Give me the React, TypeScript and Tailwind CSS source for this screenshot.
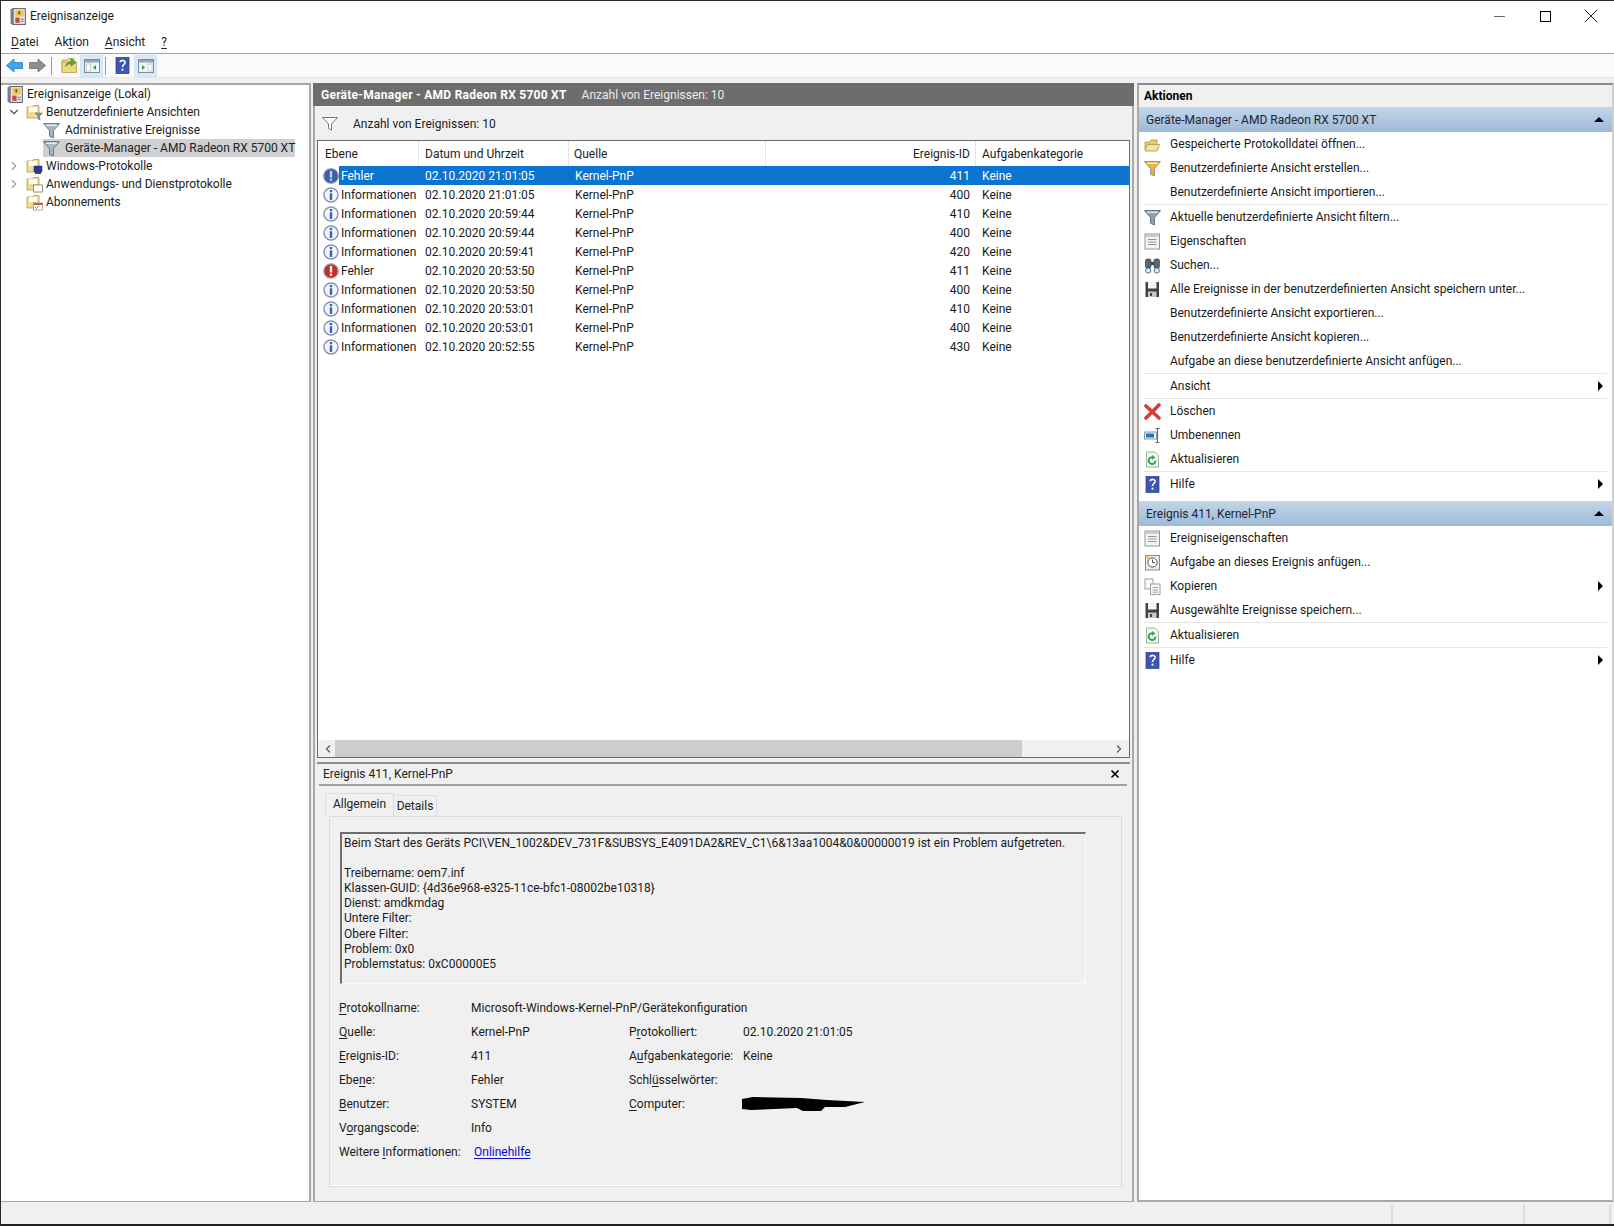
import { ChevronDown, ChevronRight, ChevronLeft, X, Minus } from "lucide-react";

const rows = [
  ["err0", "Fehler", "02.10.2020 21:01:05", "411"],
  ["info", "Informationen", "02.10.2020 21:01:05", "400"],
  ["info", "Informationen", "02.10.2020 20:59:44", "410"],
  ["info", "Informationen", "02.10.2020 20:59:44", "400"],
  ["info", "Informationen", "02.10.2020 20:59:41", "420"],
  ["err", "Fehler", "02.10.2020 20:53:50", "411"],
  ["info", "Informationen", "02.10.2020 20:53:50", "400"],
  ["info", "Informationen", "02.10.2020 20:53:01", "410"],
  ["info", "Informationen", "02.10.2020 20:53:01", "400"],
  ["info", "Informationen", "02.10.2020 20:52:55", "430"],
];

function LogIcon({ className = "" }: { className?: string }) {
  return (
    <svg viewBox="0 0 16 16" className={`h-[17px] w-[17px] shrink-0 ${className}`}>
      <rect x="2.5" y="0.5" width="12" height="15" fill="#e9e4d4" stroke="#6b6b78" />
      <rect x="0.5" y="1" width="3" height="14" fill="#7a7a90" />
      <rect x="5" y="2" width="8" height="6" fill="#e8c860" />
      <rect x="8" y="3" width="1.5" height="3" fill="#6a4a10" />
      <rect x="5" y="9" width="4" height="5" fill="#c05050" />
      <rect x="10" y="10" width="3" height="1" fill="#8888a0" />
      <rect x="10" y="12" width="3" height="1" fill="#8888a0" />
    </svg>
  );
}

function Funnel({ color = "#a9b8c2", stem = "#5f6f7a" }: { color?: string; stem?: string }) {
  return (
    <svg viewBox="0 0 16 16" className="h-[17px] w-[17px] shrink-0">
      <path d="M0.5 1.5 H15.5 L9.8 8 V15 L6.2 13.5 V8 Z" fill={color} stroke={stem} strokeWidth="0.9" />
      <path d="M3 3 H13" stroke="#ffffff" strokeWidth="1" />
    </svg>
  );
}

function Folder({ badge }: { badge?: "funnel" | "pc" | "win" | "cal" | "up" }) {
  return (
    <svg viewBox="0 0 17 17" className="h-[17px] w-[17px] shrink-0">
      <path d="M1 3 H6 L7.5 1.5 H13 V14 H1 Z" fill="#f2dc94" stroke="#b79b52" strokeWidth="0.8" />
      {badge !== "up" && <rect x="3" y="3" width="8" height="5" fill="#ffffff" />}
      {badge === "up" && (
        <g>
          <path d="M1 5 H15.5 V15.5 H1 Z" fill="#f0d87e" stroke="#b79b52" strokeWidth="0.8" />
          <path d="M4.5 9.5 C5 6 8 4.5 10 4.5 V1.5 L15 5.5 L10 9 V6.8 C8 6.8 6 7.5 4.5 9.5 Z" fill="#5aa83c" stroke="#3a7d26" strokeWidth="0.5" />
        </g>
      )}
      {badge === "funnel" && <path d="M9 9 H16.5 L13.7 12 V16 L12 15 V12 Z" fill="#8b98a0" stroke="#58646c" strokeWidth="0.5" />}
      {badge === "pc" && (
        <g>
          <rect x="8" y="8" width="8" height="6" fill="#1e3ca8" stroke="#333" strokeWidth="0.5" />
          <rect x="9" y="14" width="6" height="2" fill="#444" />
        </g>
      )}
      {badge === "win" && <rect x="7.5" y="9" width="9" height="7" fill="#fff" stroke="#777" strokeWidth="0.8" />}
      {badge === "cal" && (
        <g>
          <rect x="7.5" y="9" width="9" height="7" fill="#fff" stroke="#888" strokeWidth="0.7" />
          <rect x="7.5" y="9" width="9" height="2" fill="#c95a5a" />
          <path d="M9 13 L10.5 14.5 L13 11.5" stroke="#2d7f2d" strokeWidth="0.8" fill="none" />
        </g>
      )}
    </svg>
  );
}

function LevelIcon({ kind }: { kind: string }) {
  if (kind === "err") {
    return (
      <svg viewBox="0 0 16 16" className="h-4 w-4 shrink-0">
        <circle cx="8" cy="8" r="7.2" fill="#c92a2a" stroke="#a8a0a0" strokeWidth="1.3" />
        <rect x="6.8" y="3" width="2.4" height="6.5" fill="#fff" />
        <rect x="6.8" y="10.6" width="2.4" height="2.2" fill="#fff" />
      </svg>
    );
  }
  if (kind === "err0") {
    return (
      <svg viewBox="0 0 16 16" className="h-4 w-4 shrink-0">
        <circle cx="8" cy="8" r="7.2" fill="#3d5ea8" stroke="#6f88bb" strokeWidth="1.3" />
        <rect x="6.8" y="3" width="2.4" height="6.5" fill="#c8d4ec" />
        <rect x="6.8" y="10.6" width="2.4" height="2.2" fill="#c8d4ec" />
      </svg>
    );
  }
  return (
    <svg viewBox="0 0 16 16" className="h-4 w-4 shrink-0">
      <circle cx="8" cy="8" r="7" fill="#f2f5fb" stroke="#8a95ad" strokeWidth="1.5" />
      <rect x="6.8" y="3" width="2.4" height="2.2" fill="#3560b8" />
      <rect x="6.8" y="6.3" width="2.4" height="6.6" fill="#3560b8" />
    </svg>
  );
}

function ActionIcon({ name }: { name?: string }) {
  const cls = "h-[17px] w-[17px] shrink-0";
  switch (name) {
    case "open":
      return (
        <svg viewBox="0 0 17 17" className={cls}>
          <path d="M1 6 H6 L7 4 H13 V14 H1 Z" fill="#e6c877" stroke="#b29248" strokeWidth="0.8" />
          <path d="M1 15 L3.5 8.5 H15.5 L13 15 Z" fill="#f4e2a8" stroke="#b29248" strokeWidth="0.8" />
        </svg>
      );
    case "create":
      return <Funnel color="#eeb33a" stem="#8b8b8b" />;
    case "filter":
      return <Funnel color="#8fa1ad" stem="#5e6e78" />;
    case "props":
    case "evprops":
      return (
        <svg viewBox="0 0 17 17" className={cls}>
          <rect x="1" y="1" width="14.5" height="15" fill="#f3f3f3" stroke="#8a98a4" />
          <rect x="2" y="2" width="12.5" height="2" fill="#c6ced6" />
          <path d="M4 6.5H12.5M4 9H12.5M4 11.5H12.5" stroke="#8f98a2" strokeWidth="1" />
        </svg>
      );
    case "find":
      return (
        <svg viewBox="0 0 17 17" className={cls}>
          <rect x="1.5" y="2" width="5.5" height="9" rx="1.5" fill="#5d6670" stroke="#333" strokeWidth="0.6" />
          <rect x="10" y="2" width="5.5" height="9" rx="1.5" fill="#5d6670" stroke="#333" strokeWidth="0.6" />
          <rect x="7" y="5" width="3" height="3" fill="#444" />
          <circle cx="4.2" cy="13.5" r="2.6" fill="#dce8f4" stroke="#35608f" strokeWidth="0.9" />
          <circle cx="12.8" cy="13.5" r="2.6" fill="#dce8f4" stroke="#35608f" strokeWidth="0.9" />
        </svg>
      );
    case "save":
      return (
        <svg viewBox="0 0 17 17" className={cls}>
          <path d="M1.5 1 H15 V16 H1.5 Z" fill="#3d4348" />
          <rect x="4" y="1" width="8.5" height="6.5" fill="#f5f5f5" />
          <rect x="4" y="10.5" width="8.5" height="5.5" fill="#c9c9c9" />
          <rect x="6" y="12" width="2" height="3" fill="#444" />
        </svg>
      );
    case "delete":
      return (
        <svg viewBox="0 0 17 17" className={cls}>
          <path d="M2 3 L15 15 M15 2 L2 15" stroke="#d93a3a" strokeWidth="3.6" strokeLinecap="round" />
        </svg>
      );
    case "rename":
      return (
        <svg viewBox="0 0 17 17" className={cls}>
          <rect x="0.5" y="5" width="12" height="7" fill="#eef2f6" stroke="#8b98a4" />
          <rect x="2" y="6.5" width="8" height="4" fill="#1e78c8" />
          <path d="M11.5 1.5H15.5M13.5 1.5V15.5M11.5 15.5H15.5" stroke="#6a6a6a" strokeWidth="1.1" fill="none" />
        </svg>
      );
    case "refresh":
      return (
        <svg viewBox="0 0 17 17" className={cls}>
          <path d="M2.5 1 H11 L14.5 4.5 V16 H2.5 Z" fill="#f3f6f3" stroke="#a0b0a6" />
          <path d="M11.5 9.5 A3.4 3.4 0 1 1 8.5 6.2" fill="none" stroke="#36a35a" strokeWidth="2" />
          <path d="M8 4 L11.5 6.5 L8 8.8 Z" fill="#36a35a" />
        </svg>
      );
    case "help":
      return (
        <svg viewBox="0 0 17 17" className={cls}>
          <rect x="2" y="0.5" width="13" height="16" fill="#3b56b4" stroke="#27397f" strokeWidth="0.7" />
          <path d="M6.2 5.2 C6.4 2.8 11 2.8 11 5.4 C11 7.6 8.5 7.4 8.5 10" fill="none" stroke="#fff" strokeWidth="1.6" />
          <rect x="7.6" y="11.6" width="1.8" height="2" fill="#fff" />
        </svg>
      );
    case "task":
      return (
        <svg viewBox="0 0 17 17" className={cls}>
          <rect x="1.5" y="1.5" width="14" height="14.5" fill="#efeadd" stroke="#8c8c8c" />
          <circle cx="8.5" cy="8.5" r="4.6" fill="#fff" stroke="#555" />
          <path d="M8.5 5.5V8.5H11" stroke="#555" fill="none" />
          <path d="M3 1L4 3L6 3.4L4.3 4.8L2.5 5Z" fill="#f1b32c" />
        </svg>
      );
    case "copy":
      return (
        <svg viewBox="0 0 17 17" className={cls}>
          <rect x="1" y="1" width="8" height="10" fill="#fafafa" stroke="#93a0aa" />
          <rect x="6.5" y="6" width="9.5" height="10.5" fill="#fafafa" stroke="#93a0aa" />
          <path d="M8.5 9.5H14M8.5 12H14M8.5 14.2H14" stroke="#93a0aa" />
        </svg>
      );
    default:
      return <span className="w-[17px] shrink-0" />;
  }
}

type Act = { label?: string; icon?: string; sub?: boolean; sep?: boolean };

const actions1: Act[] = [
  { label: "Gespeicherte Protokolldatei öffnen...", icon: "open" },
  { label: "Benutzerdefinierte Ansicht erstellen...", icon: "create" },
  { label: "Benutzerdefinierte Ansicht importieren..." },
  { sep: true },
  { label: "Aktuelle benutzerdefinierte Ansicht filtern...", icon: "filter" },
  { label: "Eigenschaften", icon: "props" },
  { label: "Suchen...", icon: "find" },
  { label: "Alle Ereignisse in der benutzerdefinierten Ansicht speichern unter...", icon: "save" },
  { label: "Benutzerdefinierte Ansicht exportieren..." },
  { label: "Benutzerdefinierte Ansicht kopieren..." },
  { label: "Aufgabe an diese benutzerdefinierte Ansicht anfügen..." },
  { sep: true },
  { label: "Ansicht", sub: true },
  { sep: true },
  { label: "Löschen", icon: "delete" },
  { label: "Umbenennen", icon: "rename" },
  { label: "Aktualisieren", icon: "refresh" },
  { sep: true },
  { label: "Hilfe", icon: "help", sub: true },
];

const actions2: Act[] = [
  { label: "Ereigniseigenschaften", icon: "evprops" },
  { label: "Aufgabe an dieses Ereignis anfügen...", icon: "task" },
  { label: "Kopieren", icon: "copy", sub: true },
  { label: "Ausgewählte Ereignisse speichern...", icon: "save" },
  { sep: true },
  { label: "Aktualisieren", icon: "refresh" },
  { sep: true },
  { label: "Hilfe", icon: "help", sub: true },
];

function ActionList({ items }: { items: Act[] }) {
  return (
    <div className="flex flex-col">
      {items.map((a, i) =>
        a.sep ? (
          <div key={i} className="mx-[5px] h-px bg-[#e6e6e6]" />
        ) : (
          <div key={i} className="flex h-6 items-center pl-[5px] pr-[9px] text-[#1a1a1a]">
            <ActionIcon name={a.icon} />
            <span className="ml-[9px] flex-1">{a.label}</span>
            {a.sub && <span className="h-0 w-0 border-y-[5px] border-l-[5px] border-y-transparent border-l-black" />}
          </div>
        ),
      )}
    </div>
  );
}

function SectionHead({ title }: { title: string }) {
  return (
    <div className="flex h-[25px] items-center justify-between bg-gradient-to-b from-[#c3d6e9] to-[#9cbad9] pl-[7px] pr-[7px] text-[#1c2530]">
      <span>{title}</span>
      <span className="mr-px h-0 w-0 border-x-[5px] border-b-[5px] border-x-transparent border-b-black" />
    </div>
  );
}

function Ul({ children }: { children: string }) {
  return <span className="underline underline-offset-2">{children}</span>;
}

function Field({ label, value }: { label: React.ReactNode; value?: React.ReactNode }) {
  return (
    <div className="flex h-6 items-center text-[#1a1a1a]">
      <span className="w-[132px] shrink-0">{label}</span>
      <span>{value}</span>
    </div>
  );
}

export default function App() {
  return (
    <div
      className="flex h-[1226px] w-[1614px] flex-col overflow-hidden border-t border-l border-[#2a2a2a] bg-[#f0f0f0] text-[12px] leading-none text-[#222]"
      style={{ fontFamily: 'Roboto, sans-serif' }}
    >
      {/* title bar */}
      <div className="flex h-[30px] shrink-0 items-center bg-white pl-[9px]">
        <LogIcon />
        <span className="ml-[3px] text-[#222]">Ereignisanzeige</span>
        <div className="ml-auto flex items-center">
          <span className="flex w-[46px] justify-center"><Minus className="h-[17px] w-[17px]" strokeWidth={1} absoluteStrokeWidth /></span>
          <span className="flex w-[46px] justify-center"><span className="h-[11px] w-[11px] border border-black" /></span>
          <span className="flex w-[46px] justify-center"><X className="h-6 w-6" strokeWidth={1} absoluteStrokeWidth /></span>
        </div>
      </div>
      {/* menu */}
      <div className="flex h-[23px] shrink-0 items-center gap-[16px] border-b border-[#a0a0a0] bg-white pl-[10px]">
        <span><Ul>D</Ul>atei</span>
        <span>Ak<Ul>t</Ul>ion</span>
        <span><Ul>A</Ul>nsicht</span>
        <span><Ul>?</Ul></span>
      </div>
      {/* toolbar */}
      <div className="flex h-[24px] shrink-0 items-center border-b border-[#e8e8e8] bg-[#fafafa] pl-[5px]">
        <svg viewBox="0 0 17 15" className="h-[15px] w-[17px]"><path d="M0.5 7.5 L8 1 V4.5 H16.5 V10.5 H8 V14 Z" fill="#3ea5e8" stroke="#2a78b8" strokeWidth="0.8" /></svg>
        <svg viewBox="0 0 17 15" className="ml-[6px] h-[15px] w-[17px]"><path d="M16.5 7.5 L9 1 V4.5 H0.5 V10.5 H9 V14 Z" fill="#8f8f8f" stroke="#6c6c6c" strokeWidth="0.8" /></svg>
        <span className="ml-[5px] h-[18px] w-px bg-[#9a9a9a]" />
        <span className="ml-[9px] flex"><Folder badge="up" /></span>
        <span className="ml-[2px] flex h-[22px] w-[23px] items-center justify-center border border-[#cce4f7] bg-[#d8eafa]">
          <svg viewBox="0 0 16 14" className="h-[14px] w-[16px]"><rect x="0.5" y="0.5" width="15" height="13" fill="#eef3f6" stroke="#7f8b94" /><rect x="1" y="1" width="14" height="2.5" fill="#9aa6b0" /><rect x="2.5" y="5" width="4" height="7" fill="#fff" stroke="#9aa" strokeWidth="0.5" /><path d="M12 6 L9 8.5 L12 11 Z" fill="#3a9a4a" /></svg>
        </span>
        <span className="ml-[2px] h-[18px] w-px bg-[#9a9a9a]" />
        <span className="ml-[8px] flex"><ActionIcon name="help" /></span>
        <span className="ml-[3px] flex h-[22px] w-[23px] items-center justify-center border border-[#cce4f7] bg-[#d8eafa]">
          <svg viewBox="0 0 16 14" className="h-[14px] w-[16px]"><rect x="0.5" y="0.5" width="15" height="13" fill="#eef3f6" stroke="#7f8b94" /><rect x="1" y="1" width="14" height="2.5" fill="#9aa6b0" /><rect x="10" y="5" width="4" height="7" fill="#fff" stroke="#9aa" strokeWidth="0.5" /><path d="M4 6 L7 8.5 L4 11 Z" fill="#3a9a4a" /></svg>
        </span>
      </div>
      {/* main */}
      <div className="flex min-h-0 flex-1 pt-[5px]">
        {/* tree */}
        <div className="flex w-[310px] shrink-0 flex-col border-2 border-l-0 border-b border-t-[#a8a8a8] border-r-[#a8a8a8] border-b-[#a8a8a8] bg-white pl-[6px]">
          <div className="flex h-[18px] items-center"><LogIcon /><span className="ml-[3px]">Ereignisanzeige (Lokal)</span></div>
          <div className="flex h-[18px] items-center"><ChevronDown className="h-[14px] w-[14px] text-[#555]" strokeWidth={2} /><span className="ml-[5px] flex"><Folder badge="funnel" /></span><span className="ml-[3px]">Benutzerdefinierte Ansichten</span></div>
          <div className="flex h-[18px] items-center pl-[36px]"><Funnel /><span className="ml-[5px]">Administrative Ereignisse</span></div>
          <div className="flex h-[18px] items-center pl-[36px]"><div className="flex h-[18px] w-[252px] items-center bg-[#d0d0d0]"><Funnel /><span className="ml-[5px] whitespace-nowrap">Geräte-Manager - AMD Radeon RX 5700 XT</span></div></div>
          <div className="flex h-[18px] items-center"><ChevronRight className="h-[14px] w-[14px] text-[#a0a0a0]" strokeWidth={2} /><span className="ml-[5px] flex"><Folder badge="pc" /></span><span className="ml-[3px]">Windows-Protokolle</span></div>
          <div className="flex h-[18px] items-center"><ChevronRight className="h-[14px] w-[14px] text-[#a0a0a0]" strokeWidth={2} /><span className="ml-[5px] flex"><Folder badge="win" /></span><span className="ml-[3px]">Anwendungs- und Dienstprotokolle</span></div>
          <div className="flex h-[18px] items-center pl-[19px]"><Folder badge="cal" /><span className="ml-[3px]">Abonnements</span></div>
        </div>
        {/* center */}
        <div className="ml-[2px] flex w-[821px] shrink-0 flex-col">
          <div className="flex h-[23px] shrink-0 items-center bg-[#6d6d6d] pl-[8px] text-white">
            <span className="font-bold tracking-[0.25px]">Geräte-Manager - AMD Radeon RX 5700 XT</span>
            <span className="ml-[15px] text-[#ececec]">Anzahl von Ereignissen: 10</span>
          </div>
          <div className="flex min-h-0 flex-1 flex-col border-x-2 border-b border-[#a8a8a8] pt-[2px] pl-[2px] pr-[2px]">
            <div className="flex h-[32px] shrink-0 items-center pl-[5px]">
              <svg viewBox="0 0 16 14" className="h-[14px] w-[16px]"><path d="M0.5 0.5 H15.5 L9.5 7 V13 L6.5 11.5 V7 Z" fill="#fff" stroke="#777" /></svg>
              <span className="ml-[15px]">Anzahl von Ereignissen: 10</span>
            </div>
            {/* event list */}
            <div className="flex h-[618px] shrink-0 flex-col border border-[#696969] bg-white">
              <div className="flex h-[25px] shrink-0 items-center">
                <div className="flex h-full w-[101px] items-center border-r border-[#e5e5e5] pl-[7px]">Ebene</div>
                <div className="flex h-full w-[150px] items-center border-r border-[#e5e5e5] pl-[6px]">Datum und Uhrzeit</div>
                <div className="flex h-full w-[197px] items-center border-r border-[#e5e5e5] pl-[5px]">Quelle</div>
                <div className="flex h-full w-[210px] items-center justify-end border-r border-[#e5e5e5] pr-[5px]">Ereignis-ID</div>
                <div className="pl-[6px]">Aufgabenkategorie</div>
              </div>
              <div className="min-h-0 flex-1">
                {rows.map((r, i) => (
                  <div key={i} className="flex h-[19px] items-center">
                    <span className="ml-[5px] flex"><LevelIcon kind={r[0]} /></span>
                    <div className={`flex h-full flex-1 items-center ${i === 0 ? "bg-[#0a74cf] text-white" : "text-[#1a1a1a]"}`}>
                      <span className="w-[86px] pl-[2px]">{r[1]}</span>
                      <span className="w-[150px]">{r[2]}</span>
                      <span className="w-[197px]">Kernel-PnP</span>
                      <span className="w-[198px] text-right">{r[3]}</span>
                      <span className="ml-[12px]">Keine</span>
                    </div>
                  </div>
                ))}
              </div>
              <div className="flex h-[17px] shrink-0 items-center bg-[#f0f0f0]">
                <ChevronLeft className="ml-[4px] h-[12px] w-[12px] text-[#555]" strokeWidth={2.4} />
                <div className="ml-px h-full w-[687px] bg-[#cdcdcd]" />
                <ChevronRight className="ml-auto mr-[4px] h-[12px] w-[12px] text-[#555]" strokeWidth={2.4} />
              </div>
            </div>
            {/* preview */}
            <div className="mt-[4px] flex min-h-0 flex-1 flex-col border-t-2 border-[#8f8f8f] pl-[2px]">
              <div className="mr-[3px] flex h-[22px] shrink-0 items-center justify-between border-b-2 border-[#a0a0a0] pr-[6px] pl-[4px]">
                <span>Ereignis 411, Kernel-PnP</span>
                <X className="h-[12px] w-[12px] text-black" strokeWidth={3.4} />
              </div>
              <div className="flex pl-[6px] pt-[7px]">
                <div className="z-10 -mb-px flex h-[23px] w-[69px] items-center justify-center border border-b-0 border-[#dcdcdc] bg-[#f0f0f0] pb-[2px]">Allgemein</div>
                <div className="mt-[2px] flex h-[21px] w-[43px] items-center justify-center border border-b-0 border-l-0 border-[#dcdcdc] bg-[#f0f0f0]">Details</div>
              </div>
              <div className="ml-[10px] mr-[8px] flex flex-col border border-[#dcdcdc] pl-[10px] pt-[15px] pb-[22px] shadow-[inset_0_-1px_0_#fff]">
                <div className="flex h-[152px] w-[746px] flex-col border-2 border-r border-b border-t-[#6e6e6e] border-l-[#6e6e6e] border-r-[#fafafa] border-b-[#fafafa] pl-[2px] pt-[2px] leading-[15.1px] text-[#1a1a1a]">
                  <span className="whitespace-nowrap">Beim Start des Geräts PCI\VEN_1002&amp;DEV_731F&amp;SUBSYS_E4091DA2&amp;REV_C1\6&amp;13aa1004&amp;0&amp;00000019 ist ein Problem aufgetreten.</span>
                  <span className="h-[15.1px]" />
                  <span>Treibername: oem7.inf</span>
                  <span>Klassen-GUID: {"{4d36e968-e325-11ce-bfc1-08002be10318}"}</span>
                  <span>Dienst: amdkmdag</span>
                  <span>Untere Filter:</span>
                  <span>Obere Filter:</span>
                  <span>Problem: 0x0</span>
                  <span>Problemstatus: 0xC00000E5</span>
                </div>
                <div className="-ml-[1px] mt-[12px] flex flex-col">
                  <Field label={<><Ul>P</Ul>rotokollname:</>} value="Microsoft-Windows-Kernel-PnP/Gerätekonfiguration" />
                  <div className="flex">
                    <div className="w-[290px] shrink-0">
                      <Field label={<><Ul>Q</Ul>uelle:</>} value="Kernel-PnP" />
                      <Field label={<><Ul>E</Ul>reignis-ID:</>} value="411" />
                      <Field label={<>Ebe<Ul>n</Ul>e:</>} value="Fehler" />
                      <Field label={<><Ul>B</Ul>enutzer:</>} value="SYSTEM" />
                      <Field label={<>V<Ul>o</Ul>rgangscode:</>} value="Info" />
                    </div>
                    <div className="flex-1 [&>div>span:first-child]:w-[114px]">
                      <Field label={<>P<Ul>r</Ul>otokolliert:</>} value="02.10.2020 21:01:05" />
                      <Field label={<>A<Ul>u</Ul>fgabenkategorie:</>} value="Keine" />
                      <Field label={<>Schl<Ul>ü</Ul>sselwörter:</>} />
                      <Field
                        label={<><Ul>C</Ul>omputer:</>}
                        value={
                          <svg viewBox="0 0 124 16" className="-ml-[2px] h-4 w-[124px]">
                            <path d="M1 3 L12 1 L60 2 L86 4 L124 6 L104 11 L84 11 L80 15 L62 15 L56 12 L10 14 L1 13 Z" fill="#000" />
                          </svg>
                        }
                      />
                    </div>
                  </div>
                  <div className="flex h-6 items-center text-[#1a1a1a]">
                    <span className="w-[135px] shrink-0 whitespace-nowrap">Weitere <Ul>I</Ul>nformationen:</span>
                    <span className="text-[#0b0bd0] underline underline-offset-2">Onlinehilfe</span>
                  </div>
                </div>
              </div>
            </div>
          </div>
        </div>
        {/* actions */}
        <div className="ml-[3px] flex min-w-0 flex-1 flex-col border-2 border-t-[#8a8a8a] border-l-[#a8a8a8] border-r-[#d0d0d0] border-b-[#a8a8a8] bg-white">
          <div className="flex h-[22px] shrink-0 items-center bg-[#f0f0f0] pl-[5px] font-bold text-black">Aktionen</div>
          <SectionHead title="Geräte-Manager - AMD Radeon RX 5700 XT" />
          <ActionList items={actions1} />
          <div className="mt-[5px]"><SectionHead title="Ereignis 411, Kernel-PnP" /></div>
          <ActionList items={actions2} />
        </div>
      </div>
      {/* status bar */}
      <div className="flex h-[24px] shrink-0 border-b-2 border-[#222] bg-[#f0f0f0] pt-[3px]">
        <div className="w-[1392px] border-r-2 border-[#dcdcdc]" />
        <div className="w-[132px] border-r-2 border-[#dcdcdc]" />
        <div className="w-[86px] border-r-2 border-[#dcdcdc]" />
      </div>
    </div>
  );
}
